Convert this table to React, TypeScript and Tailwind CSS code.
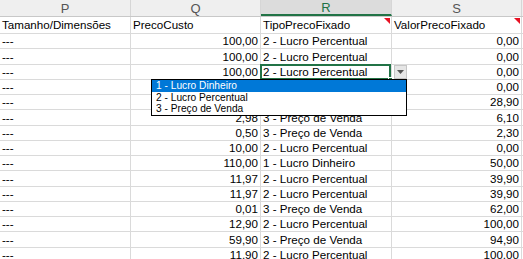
const cols = [
  { key: "P", w: "w-[131px]", align: "left" },
  { key: "Q", w: "w-[130px]", align: "right" },
  { key: "R", w: "w-[131px]", align: "left" },
  { key: "S", w: "w-[130px]", align: "right" },
];

const fields = ["Tamanho/Dimensões", "PrecoCusto", "TipoPrecoFixado", "ValorPrecoFixado"];

const rows: [string, string, string][] = [
  ["100,00", "2 - Lucro Percentual", "0,00"],
  ["100,00", "2 - Lucro Percentual", "0,00"],
  ["100,00", "2 - Lucro Percentual", "0,00"],
  ["", "", "0,00"],
  ["", "", "28,90"],
  ["2,98", "3 - Preço de Venda", "6,10"],
  ["0,50", "3 - Preço de Venda", "2,30"],
  ["10,00", "2 - Lucro Percentual", "0,00"],
  ["110,00", "1 - Lucro Dinheiro", "50,00"],
  ["11,97", "2 - Lucro Percentual", "39,90"],
  ["11,97", "2 - Lucro Percentual", "39,90"],
  ["0,01", "3 - Preço de Venda", "62,00"],
  ["12,90", "2 - Lucro Percentual", "100,00"],
  ["59,90", "3 - Preço de Venda", "94,90"],
  ["11,90", "2 - Lucro Percentual", "100,00"],
];

const options = ["1 - Lucro Dinheiro", "2 - Lucro Percentual", "3 - Preço de Venda"];

function CommentMark() {
  return (
    <div className="absolute right-[1px] top-[1px] h-0 w-0 border-l-[6px] border-t-[6px] border-l-transparent border-t-[#e81123]" />
  );
}

export default function App() {
  return (
    <div className="relative h-[259px] w-[523px] overflow-hidden bg-white font-['Liberation_Sans',Arial,sans-serif] text-[11.6px] text-black">
      {/* column letters */}
      <div className="flex h-[17px] border-b border-[#c8c8c8] bg-[#efefef]">
        {cols.map((c) => (
          <div
            key={c.key}
            className={`${c.w} flex items-center justify-center border-r border-[#d6d6d6] text-[13px] leading-none ${
              c.key === "R" ? "border-b-2 border-b-[#217346] bg-[#dcdcdc] text-[#217346]" : "text-[#555]"
            }`}
          >
            {c.key}
          </div>
        ))}
        <div className="flex-1" />
      </div>

      {/* field names */}
      <div className="flex h-[17.2px] border-b border-[#dadada]">
        {fields.map((f, i) => (
          <div
            key={f}
            className={`${cols[i].w} relative flex items-end border-r border-[#dadada] pb-[1px] pl-[2px] leading-[14px]`}
          >
            {f}
            {i >= 2 && <CommentMark />}
          </div>
        ))}
        <div className="flex-1" />
      </div>

      {rows.map((r, ri) => (
        <div key={ri} className="flex h-[15.25px] border-b border-[#dadada]">
          <div className="flex w-[131px] items-end border-r border-[#dadada] pl-[2px] leading-[14px]">---</div>
          <div className="flex w-[130px] items-end justify-end border-r border-[#dadada] pr-[2px] leading-[14px]">
            {r[0]}
          </div>
          <div className="relative flex w-[131px] items-end border-r border-[#dadada] pl-[2px] leading-[14px]">
            {r[1]}
            {ri === 2 && (
              <>
                <div className="absolute -left-[1px] -top-[1px] bottom-[-1px] right-0 border-2 border-[#217346]" />
                <div className="absolute -bottom-[3px] -right-[2px] h-[5px] w-[5px] border border-white bg-[#217346]" />
              </>
            )}
          </div>
          <div className="flex w-[130px] items-end justify-end border-r border-[#dadada] pr-[2px] leading-[14px]">
            {r[2]}
          </div>
          <div className="flex-1" />
        </div>
      ))}

      {/* validation dropdown button */}
      <div className="absolute left-[394px] top-[65px] flex h-[14px] w-[13px] items-center justify-center border border-[#c6c6c6] bg-[#e6e6e6]">
        <svg width="7" height="4" viewBox="0 0 7 4">
          <path d="M0 0h7L3.5 4z" fill="#555" />
        </svg>
      </div>

      {/* validation list */}
      <div className="absolute left-[151px] top-[79px] w-[256px] border border-black bg-white py-[0px] text-[10.2px]">
        {options.map((o, i) => (
          <div
            key={o}
            className={`h-[11.7px] pl-[4px] leading-[12px] ${i === 0 ? "bg-[#0078d7] text-white" : "text-black"}`}
          >
            {o}
          </div>
        ))}
      </div>
    </div>
  );
}
